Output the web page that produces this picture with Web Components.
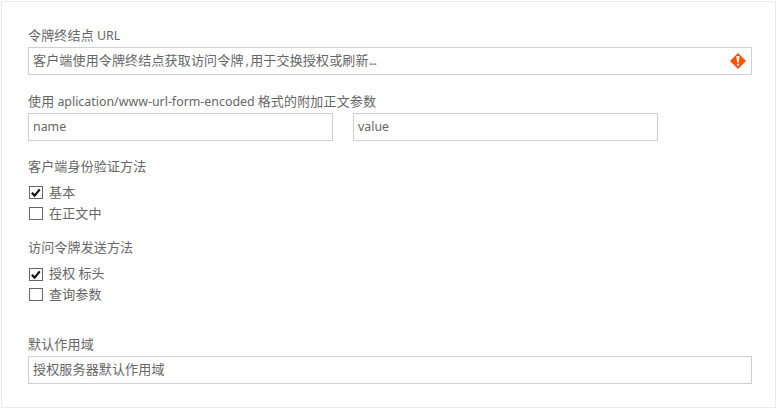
<!DOCTYPE html>
<html lang="zh-CN">
<head>
<meta charset="utf-8">
<title>OAuth 2.0</title>
<style>
body { margin: 0; background: #fff; }
</style>
</head>
<body>
<form-panel>
  <form-field label="令牌终结点" latin="URL">
    <text-box alert>客户端使用令牌终结点获取访问令牌<latin-run style="margin:0 1.3px 0 2px">,</latin-run>用于交换授权或刷新<latin-run style="letter-spacing:-.8px">...</latin-run></text-box>
  </form-field>
  <form-field class="params" label="使用" latin="aplication/www-url-form-encoded" rest="格式的附加正文参数">
    <text-box class="half"><latin-run>name</latin-run></text-box>
    <text-box class="half"><latin-run>value</latin-run></text-box>
  </form-field>
  <form-field class="auth" label="客户端身份验证方法" list>
    <check-item checked>基本</check-item>
    <check-item>在正文中</check-item>
  </form-field>
  <form-field class="send" label="访问令牌发送方法" list>
    <check-item checked style="--box-top:5px">授权 标头</check-item>
    <check-item>查询参数</check-item>
  </form-field>
  <form-field class="scope" label="默认作用域">
    <text-box>授权服务器默认作用域</text-box>
  </form-field>
</form-panel>
<script>
class Base extends HTMLElement {
  constructor() {
    super();
    this.attachShadow({ mode: 'open' }).innerHTML = this.render();
  }
}

customElements.define('latin-run', class extends Base {
  render() {
    return `<style>:host{font-family:"Noto Sans","Open Sans",sans-serif;font-size:12.4px;letter-spacing:0}</style><slot></slot>`;
  }
});

customElements.define('form-panel', class extends Base {
  render() {
    return `<style>
      :host{display:block;box-sizing:border-box;width:775px;height:407px;margin:1px;padding:23px 23px 0 26px;
        border:1px solid #ebebeb;color:#666;font:13px/20px "Noto Sans CJK SC",sans-serif;letter-spacing:.16px}
      ::slotted(.params){margin-top:16px}
      ::slotted(.auth){margin-top:15px}
      ::slotted(.send){margin-top:13px}
      ::slotted(.scope){margin-top:29px}
    </style><slot></slot>`;
  }
});

customElements.define('form-field', class extends Base {
  render() {
    const a = n => this.getAttribute(n) || '';
    const latin = a('latin') ? ` <latin-run>${a('latin')}</latin-run> ` : '';
    return `<style>
      :host{display:block}
      .label{height:20px;white-space:nowrap}
      .body{display:flex;gap:20px;margin-top:2px}
      :host([list]) .body{flex-direction:column;gap:0;margin-top:6px}
      ::slotted(text-box){flex:1}
      ::slotted(.half){flex:0 0 305px}
    </style><div class="label">${a('label')}${latin}${a('rest')}</div><div class="body"><slot></slot></div>`;
  }
});

customElements.define('text-box', class extends Base {
  render() {
    const icon = this.hasAttribute('alert') ? `<svg width="16" height="16" viewBox="0 0 16 16">
      <path d="M8 0 16 8 8 16 0 8Z" fill="#ff5000"/>
      <path d="M6.3 3h3.2L8.8 9.6H7.1ZM7 10.8h2v2H7Z" fill="#fff"/></svg>` : '';
    return `<style>
      :host{display:flex;align-items:center;box-sizing:border-box;height:28px;padding:0 5px 0 4px;
        border:1px solid #d0d0d0;white-space:nowrap}
      .text{flex:1;height:22px}
      svg{display:block}
    </style><div class="text"><slot></slot></div>${icon}`;
  }
});

customElements.define('check-item', class extends Base {
  render() {
    const tick = this.hasAttribute('checked')
      ? '<path d="M2.8 6.8 5.6 9.6 10.8 3.4" fill="none" stroke="#111" stroke-width="2.2"/>' : '';
    return `<style>
      :host{display:flex;align-items:flex-start;height:21px;gap:6px;padding-left:1px}
      svg{display:block;margin-top:var(--box-top,4px)}
    </style><svg width="14" height="13" viewBox="0 0 14 13"><rect x=".5" y=".5" width="13" height="12" fill="#fff" stroke="#666"/>${tick}</svg><span><slot></slot></span>`;
  }
});
</script>
</body>
</html>
